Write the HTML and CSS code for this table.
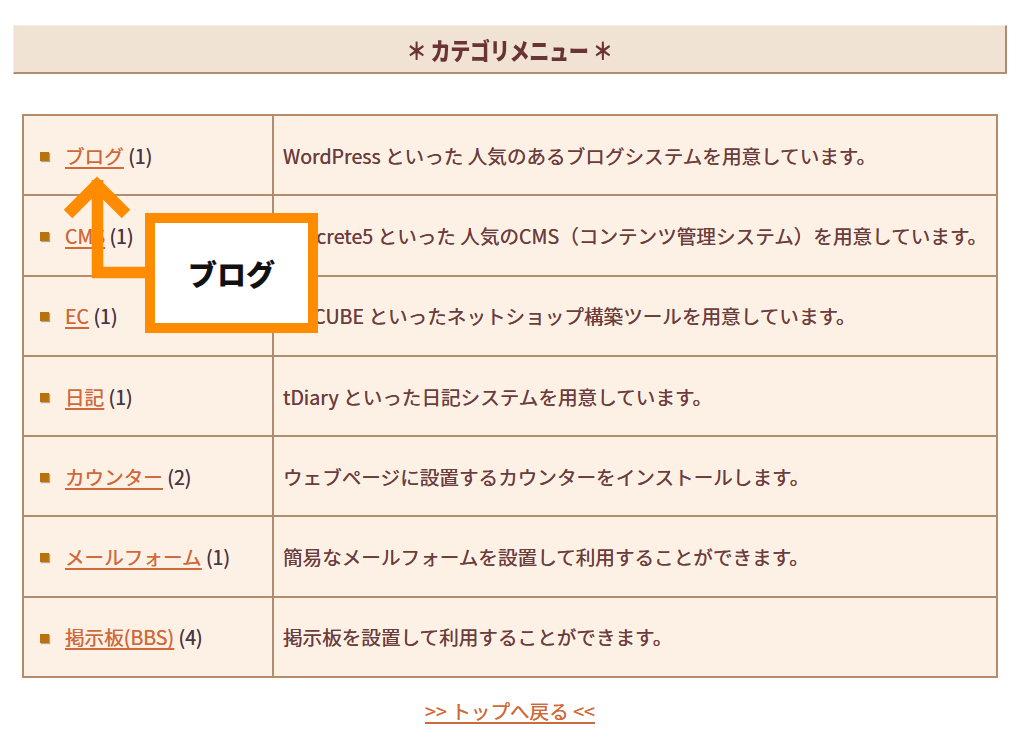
FILE: index.html
```html
<!DOCTYPE html>
<html lang="ja">
<head>
<meta charset="utf-8">
<title>カテゴリメニュー</title>
<link rel="stylesheet" href="styles.css">
</head>
<body>
<div class="page">
  <h2 class="menu-title"><span class="title-text">＊ カテゴリメニュー ＊</span></h2>
  <table class="cat-table">
    <tr>
      <td class="cat-name"><span class="bullet"></span><a href="#">ブログ</a> <span class="count">(1)</span></td>
      <td class="cat-desc">WordPress といった 人気のあるブログシステムを用意しています。</td>
    </tr>
    <tr>
      <td class="cat-name"><span class="bullet"></span><a href="#">CMS</a> <span class="count">(1)</span></td>
      <td class="cat-desc">concrete5 といった 人気のCMS（コンテンツ管理システム）を用意しています。</td>
    </tr>
    <tr>
      <td class="cat-name"><span class="bullet"></span><a href="#">EC</a> <span class="count">(1)</span></td>
      <td class="cat-desc">EC-CUBE といったネットショップ構築ツールを用意しています。</td>
    </tr>
    <tr>
      <td class="cat-name"><span class="bullet"></span><a href="#">日記</a> <span class="count">(1)</span></td>
      <td class="cat-desc">tDiary といった日記システムを用意しています。</td>
    </tr>
    <tr>
      <td class="cat-name"><span class="bullet"></span><a href="#">カウンター</a> <span class="count">(2)</span></td>
      <td class="cat-desc">ウェブページに設置するカウンターをインストールします。</td>
    </tr>
    <tr>
      <td class="cat-name"><span class="bullet"></span><a href="#">メールフォーム</a> <span class="count">(1)</span></td>
      <td class="cat-desc">簡易なメールフォームを設置して利用することができます。</td>
    </tr>
    <tr>
      <td class="cat-name"><span class="bullet"></span><a href="#">掲示板(BBS)</a> <span class="count">(4)</span></td>
      <td class="cat-desc">掲示板を設置して利用することができます。</td>
    </tr>
  </table>
  <p class="back"><a href="#">&gt;&gt; トップへ戻る &lt;&lt;</a></p>
</div>

<svg class="callout-arrow" width="1024" height="739" viewBox="0 0 1024 739" aria-hidden="true">
  <polyline points="68,214 97,185 126,214" fill="none" stroke="#ff8c00" stroke-width="12" stroke-linejoin="miter" stroke-linecap="butt"/>
  <polyline points="97.5,180 97.5,272.5 152,272.5" fill="none" stroke="#ff8c00" stroke-width="11.5" stroke-linejoin="miter"/>
</svg>
<div class="callout-box">ブログ</div>
</body>
</html>
```

FILE: styles.css
```css
html, body {
  margin: 0;
  padding: 0;
  background: #ffffff;
}

body {
  font-family: "Noto Sans CJK JP", "Noto Sans", sans-serif;
  color: #6b3d3d;
  position: relative;
  width: 1024px;
  height: 739px;
  overflow: hidden;
}

.page {
  padding: 25px 17px 0 13px;
  display: flex;
  flex-direction: column;
}

.menu-title {
  margin: 0;
  height: 46px;
  background: #f1e3d4;
  border-top: 1px solid #f5ece2;
  border-left: 1px solid #f5ece2;
  border-right: 2px solid #b38b6d;
  border-bottom: 2px solid #b38b6d;
  display: flex;
  align-items: center;
  justify-content: center;
}

.title-text {
  display: inline-block;
  font-size: 24px;
  font-weight: 900;
  color: #6b3434;
  transform: scaleX(0.84);
  letter-spacing: -0.5px;
}

.cat-table {
  margin: 40px 0 0 9px;
  width: 976px;
  border-collapse: collapse;
  background: #fdf0e5;
  border: 2px solid #b38b6d;
}

.cat-table td {
  border: 2px solid #b38b6d;
  height: 78.3px;
  padding: 0;
  font-size: 19.6px;
  font-weight: 400;
  text-shadow: 0 0 0.4px currentColor;
  vertical-align: middle;
}

.cat-name {
  width: 232px;
  padding-left: 16px !important;
  white-space: nowrap;
}

.cat-desc {
  padding-left: 9px !important;
  color: #6b3d3d;
  white-space: nowrap;
}

.bullet {
  display: inline-block;
  width: 9px;
  height: 9px;
  background: #b8730f;
  box-shadow: 1px 1px 1px rgba(90, 70, 50, 0.45);
  margin-right: 16px;
  vertical-align: middle;
  position: relative;
  top: -2px;
}

.cat-name a,
.back a {
  color: #d0693a;
  text-decoration: underline;
  text-decoration-thickness: 2px;
  text-underline-offset: 3px;
}

.count {
  color: #4b3646;
}

.back {
  margin: 18px 0 0 0;
  text-align: center;
  font-size: 19.6px;
  font-weight: 400;
  text-shadow: 0 0 0.4px #d0693a;
}

.callout-arrow {
  position: absolute;
  left: 0;
  top: 0;
  pointer-events: none;
}

.callout-box {
  position: absolute;
  left: 145px;
  top: 213px;
  width: 153px;
  height: 100px;
  border: 10px solid #ff8c00;
  background: #ffffff;
  color: #111111;
  font-weight: 900;
  font-size: 29px;
  display: flex;
  align-items: center;
  justify-content: center;
}
```
